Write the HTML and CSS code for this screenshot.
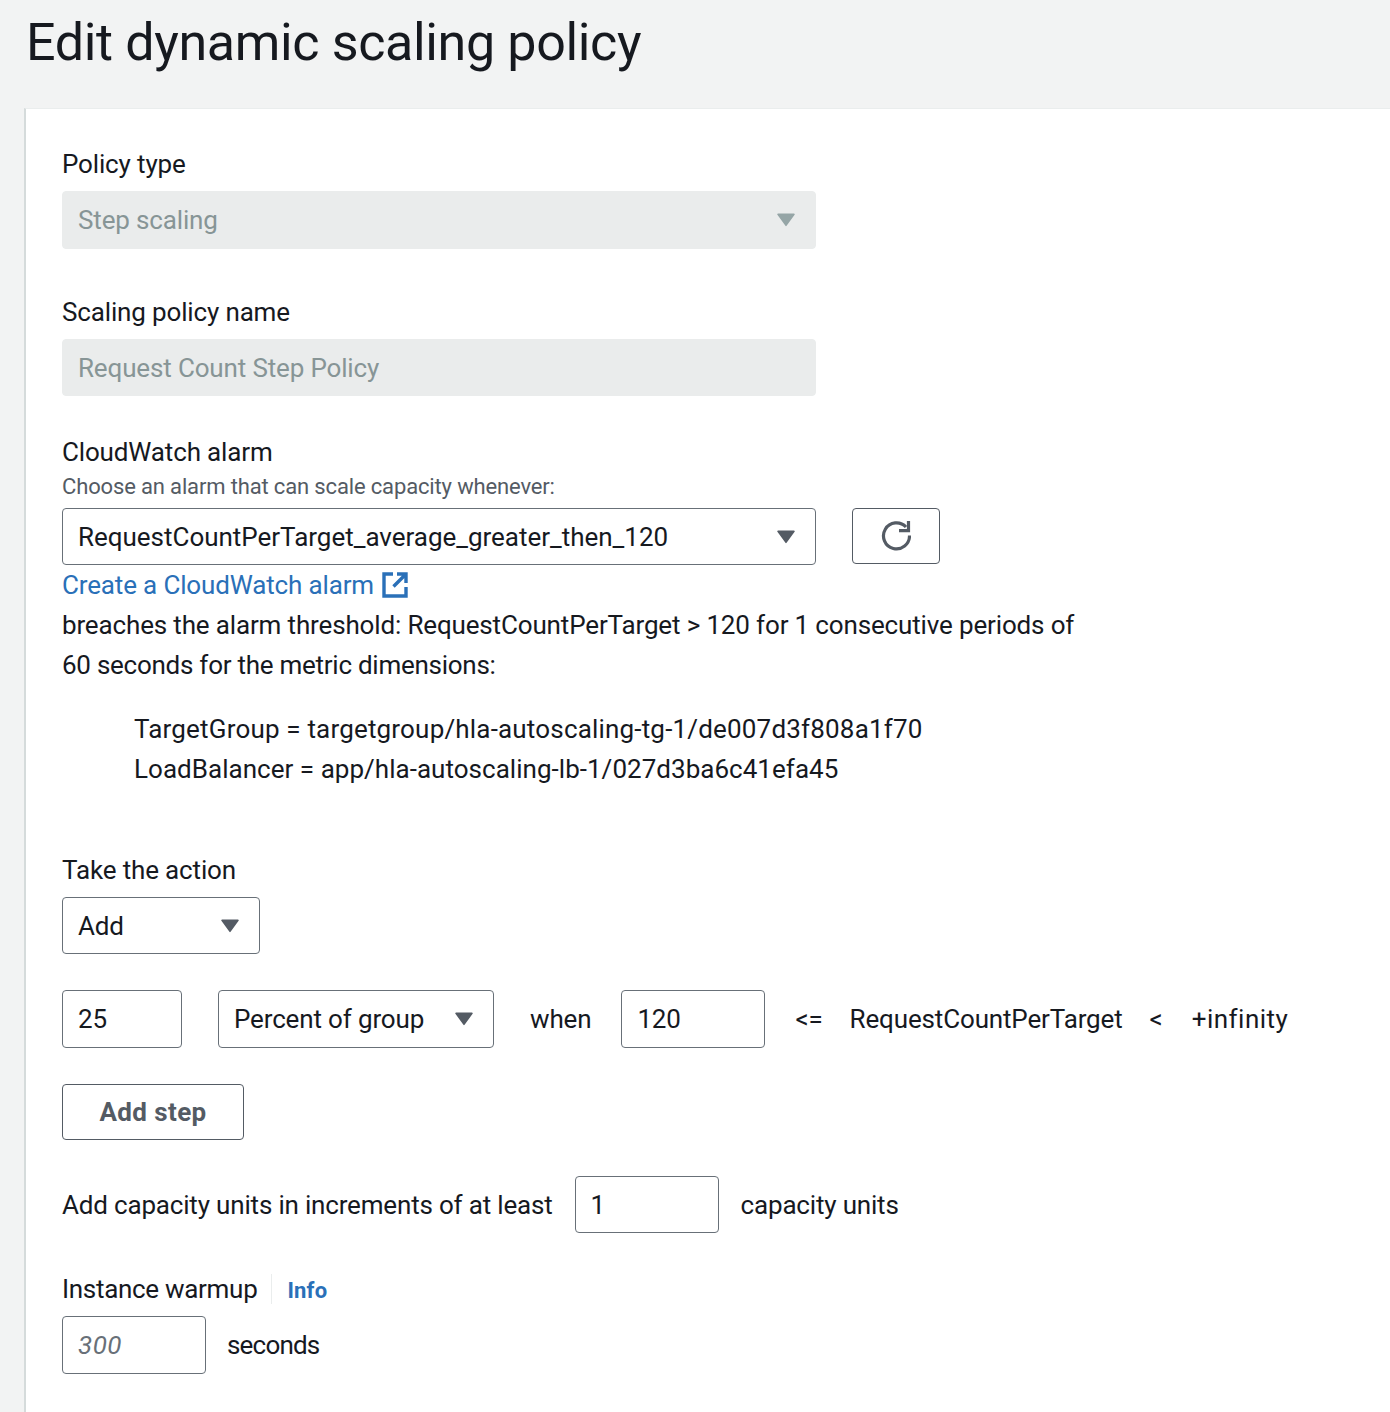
FILE: index.html

```html
<!DOCTYPE html>
<html lang="en">
<head>
    <meta charset="UTF-8">
    <meta name="viewport" content="width=device-width, initial-scale=1.0">
    <title>Edit dynamic scaling policy</title>
    <link rel="stylesheet" href="styles.css">
</head>
<body>
    <div class="page-header">
        <h1>Edit dynamic scaling policy</h1>
    </div>
    <div class="card">
        <div class="label label-first">Policy type</div>
        <div class="control select disabled wide">
            <span>Step scaling</span>
            <svg class="caret" viewBox="0 0 20 16"><path d="M2 1.5h16a.8.8 0 0 1 .6 1.3l-8 11a.8.8 0 0 1-1.2 0l-8-11A.8.8 0 0 1 2 1.5z"/></svg>
        </div>

        <div class="label label-name">Scaling policy name</div>
        <div class="control disabled wide short">Request Count Step Policy</div>

        <div class="label label-alarm">CloudWatch alarm</div>
        <div class="help">Choose an alarm that can scale capacity whenever:</div>
        <div class="alarm-row">
            <div class="control select wide">
                <span>RequestCountPerTarget_average_greater_then_120</span>
                <svg class="caret" viewBox="0 0 20 16"><path d="M2 1.5h16a.8.8 0 0 1 .6 1.3l-8 11a.8.8 0 0 1-1.2 0l-8-11A.8.8 0 0 1 2 1.5z"/></svg>
            </div>
            <button class="refresh-btn">
                <svg viewBox="0 0 30 30"><path class="stroke" d="M25 6A13 13 0 1 0 28.5 14.5"/><path class="stroke" d="M27.5 0v9.7H18"/></svg>
            </button>
        </div>
        <a class="link" href="#">Create a CloudWatch alarm
            <svg class="ext" viewBox="0 0 26 26"><path class="link-stroke" d="M11 2H2v22h22v-9"/><path class="link-stroke" d="M15 2h9v9M24 2L11.5 14.5"/></svg>
        </a>
        <p class="text">breaches the alarm threshold: RequestCountPerTarget &gt; 120 for 1 consecutive periods of</p>
        <p class="text text-tight">60 seconds for the metric dimensions:</p>
        <div class="dimensions">
            <p class="text target-line">TargetGroup = targetgroup/hla-autoscaling-tg-1/de007d3f808a1f70</p>
            <p class="text">LoadBalancer = app/hla-autoscaling-lb-1/027d3ba6c41efa45</p>
        </div>

        <div class="label label-action">Take the action</div>
        <div class="control select action-select">
            <span>Add</span>
            <svg class="caret" viewBox="0 0 20 16"><path d="M2 1.5h16a.8.8 0 0 1 .6 1.3l-8 11a.8.8 0 0 1-1.2 0l-8-11A.8.8 0 0 1 2 1.5z"/></svg>
        </div>

        <div class="step-row">
            <div class="control amount">25</div>
            <div class="control select unit-select">
                <span>Percent of group</span>
                <svg class="caret" viewBox="0 0 20 16"><path d="M2 1.5h16a.8.8 0 0 1 .6 1.3l-8 11a.8.8 0 0 1-1.2 0l-8-11A.8.8 0 0 1 2 1.5z"/></svg>
            </div>
            <span class="when">when</span>
            <div class="control bound">120</div>
            <span class="op">&lt;=</span>
            <span class="metric">RequestCountPerTarget</span>
            <span class="lt">&lt;</span>
            <span class="inf">+infinity</span>
        </div>

        <button class="add-step">Add step</button>

        <div class="capacity-row">
            <span>Add capacity units in increments of at least</span>
            <div class="control bound">1</div>
            <span>capacity units</span>
        </div>

        <div class="warmup-label">
            <span>Instance warmup</span>
            <a class="info" href="#">Info</a>
        </div>
        <div class="warmup-row">
            <div class="control bound placeholder">300</div>
            <span class="seconds">seconds</span>
        </div>
    </div>
</body>
</html>
```

FILE: styles.css

```css
* {
    box-sizing: border-box;
}

body {
    margin: 0;
    height: 1412px;
    overflow: hidden;
    background-color: #f2f3f3;
    color: #16191f;
    font-family: Roboto, sans-serif;
    font-size: 26px;
    line-height: 40px;
    letter-spacing: -0.15px;
}

.page-header {
    height: 108px;
    padding: 13px 0 0 26px;
}

h1 {
    margin: 0;
    font-size: 52px;
    line-height: 60px;
    font-weight: 400;
    letter-spacing: -0.35px;
}

.card {
    margin-left: 24px;
    height: 1304px;
    padding: 35px 0 0 36px;
    background-color: #fff;
    border-left: 2px solid #d5dbdb;
    border-top: 1px solid #eaeded;
}

.label-first {
    margin-bottom: 7px;
}

.label-name {
    margin: 43px 0 7px;
}

.label-alarm {
    margin-top: 36px;
}

.help {
    font-size: 22px;
    line-height: 28px;
    color: #545b64;
    margin-top: 1px;
    margin-bottom: 7px;
}

.control {
    height: 58px;
    padding: 0 15px;
    display: flex;
    align-items: center;
    justify-content: space-between;
    border: 1px solid #687078;
    border-radius: 4px;
    background-color: #fff;
}

.wide {
    width: 754px;
}

.short {
    height: 57px;
}

.disabled {
    background-color: #eaecec;
    border-color: #eaecec;
    color: #879596;
}

.disabled .caret {
    fill: #95a5a6;
}

.caret {
    width: 20px;
    height: 16px;
    margin-right: 4px;
    fill: #545b64;
}

.alarm-row {
    display: flex;
    gap: 36px;
}

.alarm-row .control {
    height: 57px;
    letter-spacing: -0.02px;
}

.refresh-btn {
    width: 88px;
    height: 56px;
    padding: 0;
    display: flex;
    align-items: center;
    justify-content: center;
    background-color: #fff;
    border: 1px solid #545b64;
    border-radius: 4px;
}

.refresh-btn svg {
    width: 30px;
    height: 30px;
}

.stroke {
    fill: none;
    stroke: #545b64;
    stroke-width: 3.2;
}

.link {
    display: flex;
    align-items: center;
    gap: 8px;
    color: #2a70b8;
    text-decoration: none;
    height: 40px;
}

.ext {
    width: 26px;
    height: 26px;
}

.link-stroke {
    fill: none;
    stroke: #2a70b8;
    stroke-width: 3.4;
}

.text {
    margin: 0;
    height: 40px;
}

.text-tight {
    letter-spacing: -0.26px;
}

.dimensions {
    margin: 24px 0 0 72px;
    letter-spacing: 0.03px;
}

.dimensions .target-line {
    letter-spacing: 0.18px;
}

.label-action {
    margin-top: 61px;
    margin-bottom: 7px;
}

.action-select {
    width: 198px;
    height: 57px;
}

.step-row {
    display: flex;
    align-items: center;
    margin-top: 36px;
}

.amount {
    width: 120px;
}

.unit-select {
    width: 276px;
    margin-left: 36px;
}

.when {
    margin-left: 36px;
}

.bound {
    width: 144px;
}

.step-row .bound {
    margin-left: 30px;
}

.op {
    margin-left: 30px;
}

.metric {
    margin-left: 27px;
}

.lt {
    margin-left: 27px;
}

.inf {
    margin-left: 29px;
    letter-spacing: 0.5px;
}

.add-step {
    display: block;
    width: 182px;
    height: 56px;
    margin-top: 36px;
    padding: 0;
    background-color: #fff;
    border: 1px solid #545b64;
    border-radius: 4px;
    color: #545b64;
    font-family: inherit;
    font-size: 26px;
    font-weight: 700;
    letter-spacing: 0.4px;
}

.capacity-row {
    display: flex;
    align-items: center;
    gap: 22px;
    margin-top: 36px;
    letter-spacing: -0.18px;
}

.capacity-row .bound {
    height: 57px;
}

.warmup-label {
    display: flex;
    align-items: center;
    margin-top: 36px;
    height: 40px;
    letter-spacing: -0.3px;
}

.info {
    margin-left: 14px;
    padding-left: 15px;
    border-left: 1px solid #eaeded;
    color: #2a70b8;
    font-size: 22px;
    font-weight: 700;
    letter-spacing: 0.2px;
    text-decoration: none;
    height: 30px;
    line-height: 34px;
}

.warmup-row {
    display: flex;
    align-items: center;
    gap: 21px;
    margin-top: 7px;
}

.placeholder {
    color: #687078;
    font-style: italic;
    letter-spacing: 0.5px;
}

.seconds {
    letter-spacing: -0.8px;
}
```
